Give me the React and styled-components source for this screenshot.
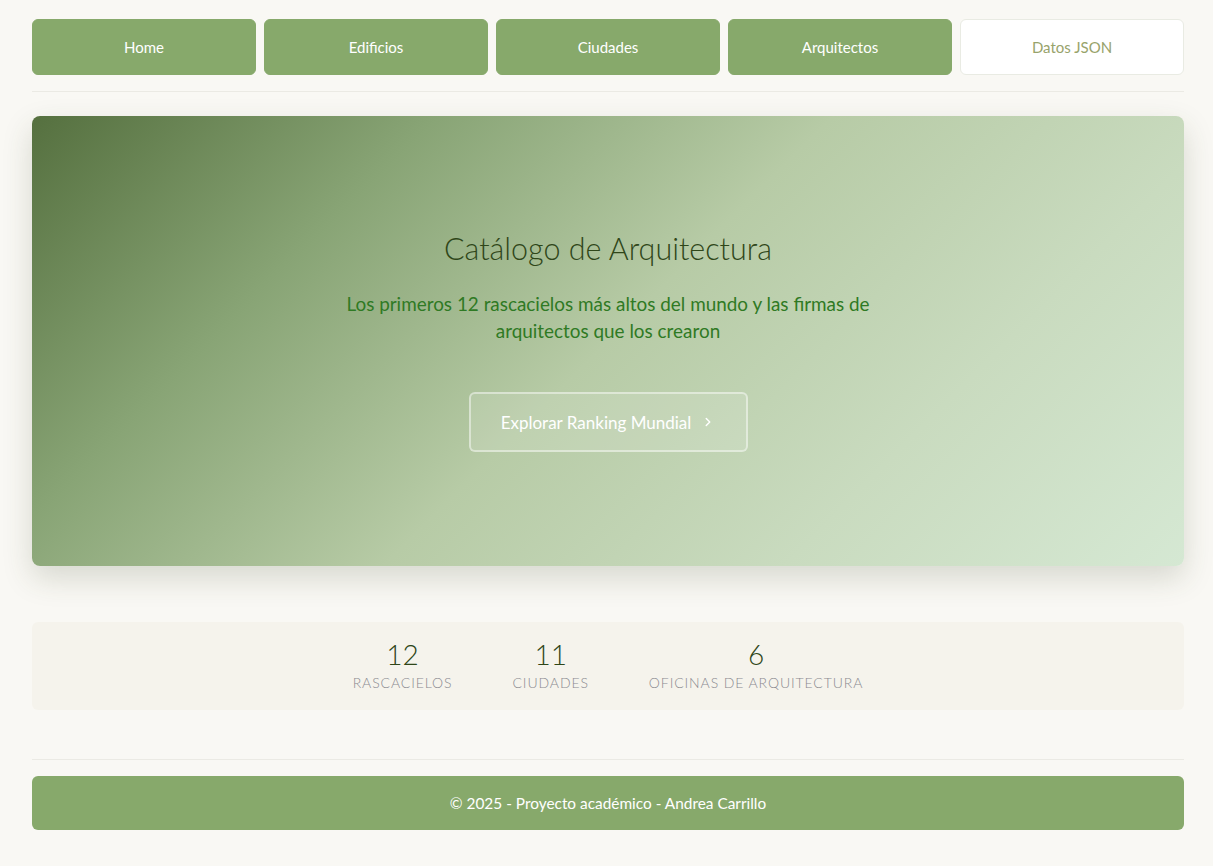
import React from 'react';
import styled, { createGlobalStyle } from 'styled-components';

const GlobalStyle = createGlobalStyle`
    html, body {
        margin: 0;
        padding: 0;
        background: #f9f8f4;
        font-family: 'Lato', 'Open Sans', sans-serif;
    }
`;

const navItems = ['Home', 'Edificios', 'Ciudades', 'Arquitectos', 'Datos JSON'];

const stats = [
    { value: '12', label: 'Rascacielos' },
    { value: '11', label: 'Ciudades' },
    { value: '6', label: 'Oficinas de arquitectura' },
];

function App() {
    return (
        <Page>
            <GlobalStyle />
            <Nav>
                {navItems.map((item, i) => (
                    <NavButton key={item} $light={i === navItems.length - 1}>{item}</NavButton>
                ))}
            </Nav>
            <Divider />

            <Hero>
                <Title>Catálogo de Arquitectura</Title>
                <Subtitle>
                    Los primeros 12 rascacielos más altos del mundo y las firmas de
                    <br />arquitectos que los crearon
                </Subtitle>
                <HeroButton>
                    Explorar Ranking Mundial
                    <svg width="14" height="14" viewBox="0 0 24 24" fill="none" stroke="currentColor" strokeWidth="2.5" strokeLinecap="round" strokeLinejoin="round">
                        <path d="M9 6l6 6-6 6" />
                    </svg>
                </HeroButton>
            </Hero>

            <Stats>
                {stats.map(s => (
                    <Stat key={s.label}>
                        <StatValue>{s.value}</StatValue>
                        <StatLabel>{s.label}</StatLabel>
                    </Stat>
                ))}
            </Stats>

            <Divider $space />
            <Footer>© 2025 - Proyecto académico - Andrea Carrillo</Footer>
        </Page>
    );
}

export default App;

const Page = styled.div`
    width: 1152px;
    margin: 0 0 0 32px;
    padding: 19px 0 36px;
`;

const Nav = styled.nav`
    display: grid;
    grid-template-columns: repeat(5, 1fr);
    gap: 8px;
`;

const NavButton = styled.a`
    height: 56px;
    box-sizing: border-box;
    display: flex;
    align-items: center;
    justify-content: center;
    border-radius: 6px;
    font-size: 15px;
    cursor: pointer;
    background: ${p => (p.$light ? '#ffffff' : '#87a96b')};
    color: ${p => (p.$light ? '#98a36b' : '#ffffff')};
    border: 1px solid ${p => (p.$light ? '#e9ebe3' : '#87a96b')};
`;

const Divider = styled.hr`
    border: none;
    border-top: 1px solid #ebeae4;
    margin: ${p => (p.$space ? '49px 0 16px' : '16px 0 24px')};
`;

const Hero = styled.section`
    height: 450px;
    border-radius: 8px;
    background: linear-gradient(135deg, #55703f 0%, #88a475 25%, #b7cba6 50%, #c9dbbf 75%, #d5e8d3 100%);
    box-shadow: 0 12px 30px rgba(60, 70, 40, 0.18);
    display: flex;
    flex-direction: column;
    align-items: center;
    justify-content: center;
    text-align: center;
`;

const Title = styled.h1`
    margin: 0 0 24px;
    font-size: 30.5px;
    font-weight: 300;
    color: #2f4619;
    line-height: 36px;
`;

const Subtitle = styled.p`
    margin: 0 0 48px;
    font-size: 18.9px;
    line-height: 27px;
    font-weight: 400;
    color: #2f7a24;
`;

const HeroButton = styled.a`
    width: 279px;
    height: 60px;
    box-sizing: border-box;
    display: flex;
    align-items: center;
    justify-content: center;
    gap: 10px;
    border: 2px solid rgba(255, 255, 255, 0.45);
    background: rgba(255, 255, 255, 0.12);
    border-radius: 6px;
    color: #ffffff;
    font-size: 17px;
    cursor: pointer;
`;

const Stats = styled.section`
    margin-top: 56px;
    height: 88px;
    background: #f5f3ec;
    border-radius: 6px;
    display: flex;
    justify-content: center;
    align-items: center;
    gap: 60px;
`;

const Stat = styled.div`
    display: flex;
    flex-direction: column;
    align-items: center;
    gap: 4px;
`;

const StatValue = styled.div`
    font-size: 28px;
    font-weight: 300;
    color: #2f4619;
    line-height: 30px;
`;

const StatLabel = styled.div`
    font-size: 14px;
    font-weight: 300;
    color: #8a8a90;
    text-transform: uppercase;
    letter-spacing: 0.9px;
    line-height: 20px;
`;

const Footer = styled.footer`
    height: 54px;
    background: #87a96b;
    border-radius: 6px;
    display: flex;
    align-items: center;
    justify-content: center;
    color: #ffffff;
    font-size: 15.4px;
`;
